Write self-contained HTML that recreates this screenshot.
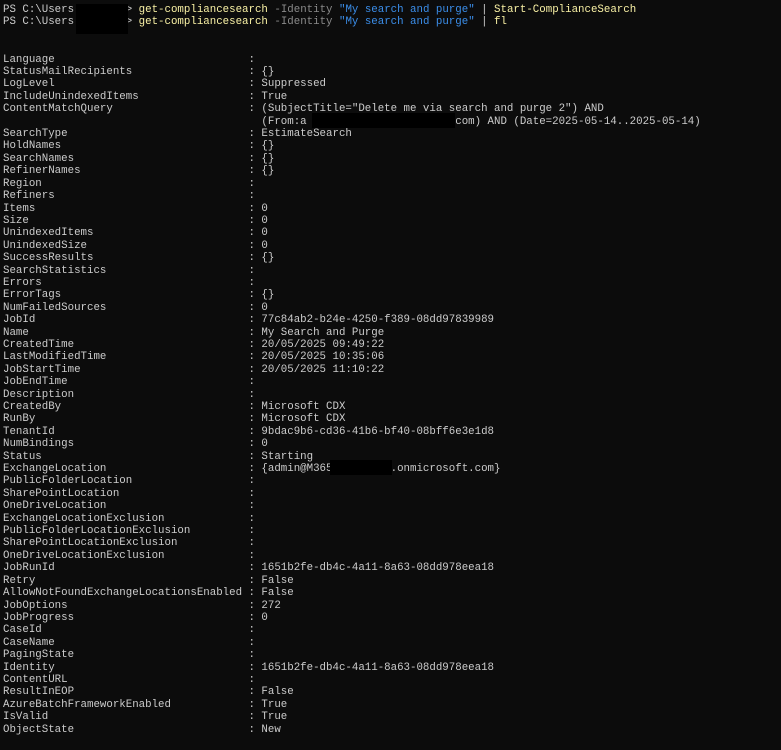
<!DOCTYPE html>
<html><head><meta charset="utf-8"><style>
html,body{margin:0;padding:0;background:#0c0c0c;width:781px;height:750px;overflow:hidden;}
pre{position:absolute;left:3px;top:4px;margin:0;font-family:"Liberation Mono",monospace;font-size:10.78px;line-height:12.41px;color:#cccccc;white-space:pre;}
.y{color:#f9f1a5}.g{color:#8a8a8a}.b{color:#3b8eea}
.r{position:absolute;background:#000;}
</style></head><body>
<pre>PS C:\Users        &gt; <span class="y">get-compliancesearch</span> <span class="g">-Identity</span> <span class="b">"My search and purge"</span> | <span class="y">Start-ComplianceSearch</span>
PS C:\Users        &gt; <span class="y">get-compliancesearch</span> <span class="g">-Identity</span> <span class="b">"My search and purge"</span> | <span class="y">fl</span>


Language                              :
StatusMailRecipients                  : {}
LogLevel                              : Suppressed
IncludeUnindexedItems                 : True
ContentMatchQuery                     : (SubjectTitle="Delete me via search and purge 2") AND
                                        (From:a                      .com) AND (Date=2025-05-14..2025-05-14)
SearchType                            : EstimateSearch
HoldNames                             : {}
SearchNames                           : {}
RefinerNames                          : {}
Region                                :
Refiners                              :
Items                                 : 0
Size                                  : 0
UnindexedItems                        : 0
UnindexedSize                         : 0
SuccessResults                        : {}
SearchStatistics                      :
Errors                                :
ErrorTags                             : {}
NumFailedSources                      : 0
JobId                                 : 77c84ab2-b24e-4250-f389-08dd97839989
Name                                  : My Search and Purge
CreatedTime                           : 20/05/2025 09:49:22
LastModifiedTime                      : 20/05/2025 10:35:06
JobStartTime                          : 20/05/2025 11:10:22
JobEndTime                            :
Description                           :
CreatedBy                             : Microsoft CDX
RunBy                                 : Microsoft CDX
TenantId                              : 9bdac9b6-cd36-41b6-bf40-08bff6e3e1d8
NumBindings                           : 0
Status                                : Starting
ExchangeLocation                      : {admin@M365         .onmicrosoft.com}
PublicFolderLocation                  :
SharePointLocation                    :
OneDriveLocation                      :
ExchangeLocationExclusion             :
PublicFolderLocationExclusion         :
SharePointLocationExclusion           :
OneDriveLocationExclusion             :
JobRunId                              : 1651b2fe-db4c-4a11-8a63-08dd978eea18
Retry                                 : False
AllowNotFoundExchangeLocationsEnabled : False
JobOptions                            : 272
JobProgress                           : 0
CaseId                                :
CaseName                              :
PagingState                           :
Identity                              : 1651b2fe-db4c-4a11-8a63-08dd978eea18
ContentURL                            :
ResultInEOP                           : False
AzureBatchFrameworkEnabled            : True
IsValid                               : True
ObjectState                           : New</pre>
<div class="r" style="left:76px;top:4px;width:52px;height:30px"></div>
<div class="r" style="left:312px;top:113px;width:143px;height:15px"></div>
<div class="r" style="left:330px;top:460px;width:62px;height:15px"></div>
</body></html>
